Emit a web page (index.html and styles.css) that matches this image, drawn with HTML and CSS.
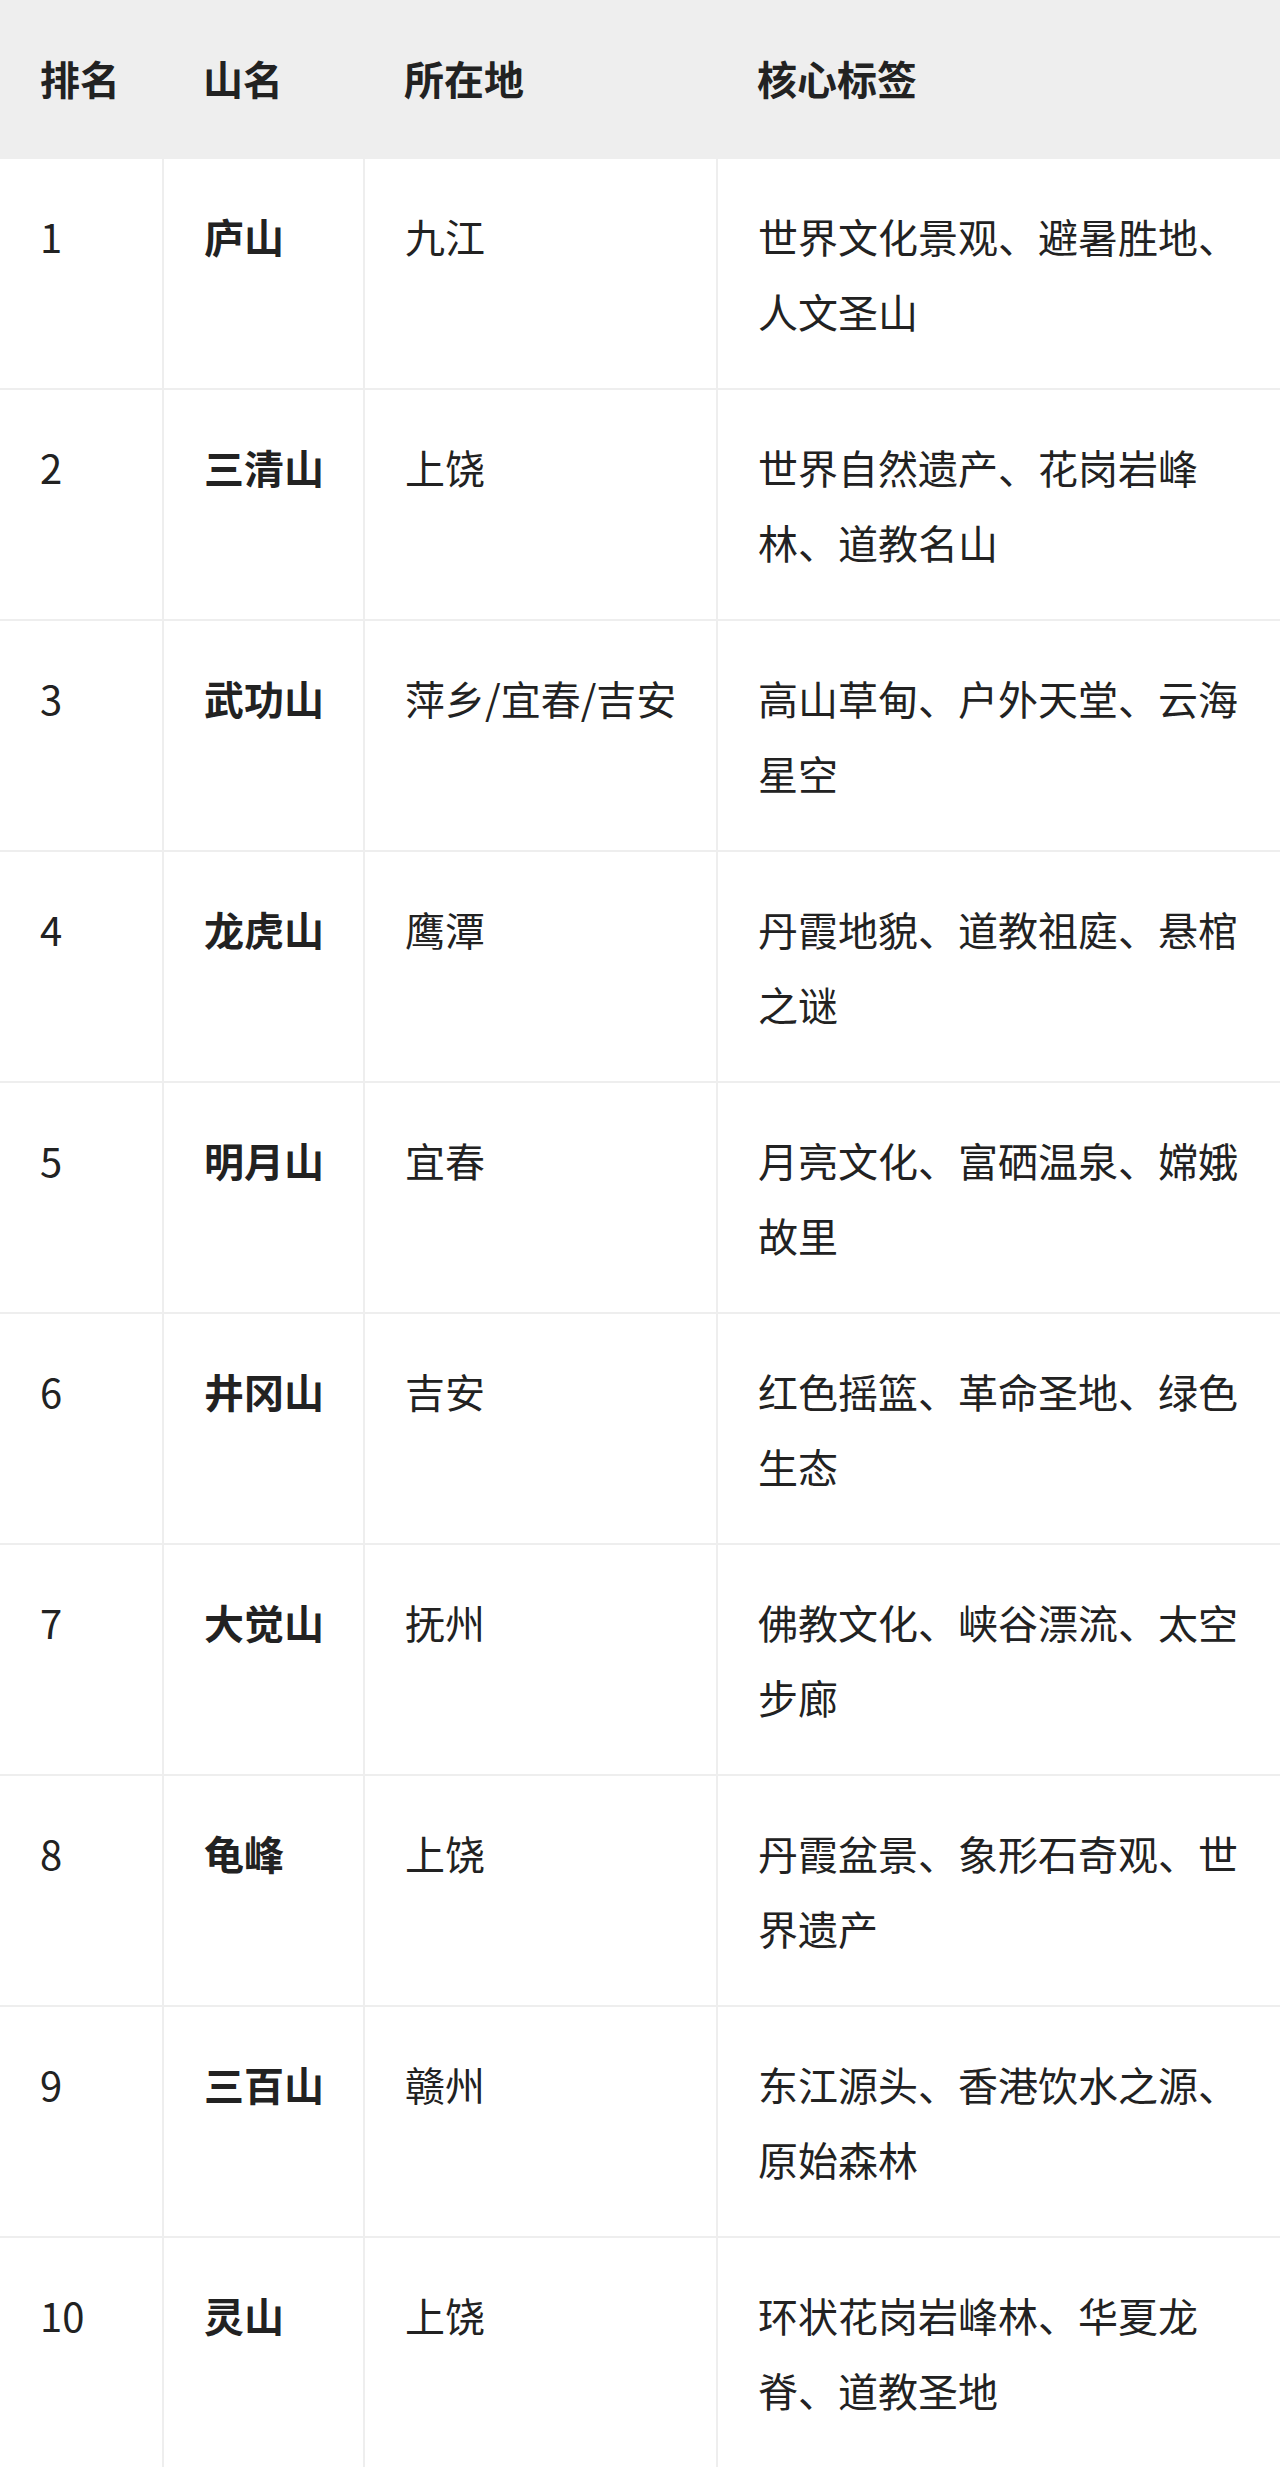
FILE: index.html
```html
<!DOCTYPE html>
<html lang="zh-CN">
<head>
<meta charset="utf-8">
<title>江西名山排名</title>
<link rel="stylesheet" href="styles.css">
</head>
<body>
<table class="rank-table">
  <colgroup>
    <col class="c-rank">
    <col class="c-name">
    <col class="c-place">
    <col class="c-tags">
  </colgroup>
  <thead>
    <tr>
      <th>排名</th>
      <th>山名</th>
      <th>所在地</th>
      <th>核心标签</th>
    </tr>
  </thead>
  <tbody>
    <tr><td>1</td><td class="name">庐山</td><td class="place">九江</td><td>世界文化景观、避暑胜地、人文圣山</td></tr>
    <tr><td>2</td><td class="name">三清山</td><td class="place">上饶</td><td>世界自然遗产、花岗岩峰林、道教名山</td></tr>
    <tr><td>3</td><td class="name">武功山</td><td class="place">萍乡/宜春/吉安</td><td>高山草甸、户外天堂、云海星空</td></tr>
    <tr><td>4</td><td class="name">龙虎山</td><td class="place">鹰潭</td><td>丹霞地貌、道教祖庭、悬棺之谜</td></tr>
    <tr><td>5</td><td class="name">明月山</td><td class="place">宜春</td><td>月亮文化、富硒温泉、嫦娥故里</td></tr>
    <tr><td>6</td><td class="name">井冈山</td><td class="place">吉安</td><td>红色摇篮、革命圣地、绿色生态</td></tr>
    <tr><td>7</td><td class="name">大觉山</td><td class="place">抚州</td><td>佛教文化、峡谷漂流、太空步廊</td></tr>
    <tr><td>8</td><td class="name">龟峰</td><td class="place">上饶</td><td>丹霞盆景、象形石奇观、世界遗产</td></tr>
    <tr><td>9</td><td class="name">三百山</td><td class="place">赣州</td><td>东江源头、香港饮水之源、原始森林</td></tr>
    <tr><td>10</td><td class="name">灵山</td><td class="place">上饶</td><td>环状花岗岩峰林、华夏龙脊、道教圣地</td></tr>
  </tbody>
</table>
</body>
</html>
```

FILE: styles.css
```css
html, body {
  margin: 0;
  padding: 0;
  background: #ffffff;
}

body {
  font-family: "Noto Sans CJK SC", "Noto Sans", sans-serif;
  font-size: 40px;
  line-height: 75px;
  color: #222222;
}

.rank-table {
  width: 1280px;
  border-collapse: collapse;
  table-layout: fixed;
}

.c-rank { width: 163px; }
.c-name { width: 201px; }
.c-place { width: 353px; }
.c-tags { width: 563px; }

.rank-table th {
  background: #eeeeee;
  font-weight: 700;
  text-align: left;
  padding: 41px 40px;
  border: none;
  white-space: nowrap;
}

.rank-table td {
  vertical-align: top;
  text-align: left;
  padding: 40px 40px 39px 40px;
  border: 2px solid #eeeeee;
}

.rank-table td:first-child {
  border-left: none;
}

.rank-table td:last-child {
  border-right: none;
}

.rank-table tbody tr:last-child td {
  border-bottom: none;
}

.rank-table td.name {
  font-weight: 700;
  white-space: nowrap;
}

.rank-table td.place {
  white-space: nowrap;
}
```
